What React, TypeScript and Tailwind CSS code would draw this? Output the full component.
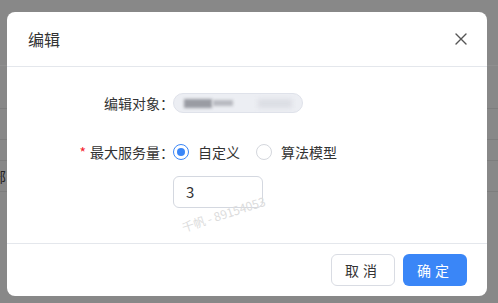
import React from 'react';

const font = { fontFamily: '"Noto Sans CJK SC", "Noto Sans", sans-serif' };

function Radio({ checked, label }: { checked?: boolean; label: string }) {
  return (
    <label className="flex items-center gap-[9px] text-[14px] text-[#333]">
      {checked ? (
        <span className="flex h-4 w-4 items-center justify-center rounded-full border border-[#3a86f7]">
          <span className="h-2 w-2 rounded-full bg-[#3a86f7]" />
        </span>
      ) : (
        <span className="h-4 w-4 rounded-full border border-[#d4d7dd] bg-white" />
      )}
      <span>{label}</span>
    </label>
  );
}

function Backdrop() {
  return (
    <div className="flex h-full w-full flex-col bg-[#888]">
      <div className="h-[66px] border-b border-[#8f8f8f]" />
      <div className="h-[43px] border-b border-[#7d7d7d]" />
      <div className="h-[31px] border-b border-[#7d7d7d]" />
      <div className="h-[21px] border-b border-[#7d7d7d]" />
      <div className="flex h-[31px] items-center border-b border-[#7d7d7d]">
        <span className="-ml-[8px] text-[14px] text-[#222]">部</span>
      </div>
    </div>
  );
}

export default function App() {
  return (
    <div className="relative h-[303px] w-[498px] overflow-hidden" style={font}>
      <Backdrop />
      <div className="absolute inset-0 pl-[7px] pt-[12px]">
        <div className="relative flex h-[284px] w-[480px] flex-col overflow-hidden rounded-[8px] bg-white">
          <div className="flex h-[55px] items-center justify-between border-b border-[#e4e7ec] pl-[21px] pr-[20px]">
            <span className="text-[16px] text-[#333]">编辑</span>
            <svg width="14" height="14" viewBox="0 0 14 14" className="mr-[-1px]">
              <path d="M2 2L12 12M12 2L2 12" stroke="#555" strokeWidth="1.4" strokeLinecap="round" />
            </svg>
          </div>

          <div className="flex flex-1 flex-col pt-[26px] text-[14px] text-[#333]">
            <div className="flex h-[20px] items-center">
              <div className="w-[160px] text-right">
                编辑对象<span className="mr-[-7px]">：</span>
              </div>
              <div className="ml-[6px] flex h-[20px] w-[130px] items-center rounded-full border border-[#dfe2ea] bg-[#eceef3] px-[10px]">
                <span className="h-[9px] w-[28px] bg-[#9a9ca3] blur-[1.5px]" />
                <span className="ml-[1px] h-[6px] w-[20px] bg-[#b8bac0] blur-[1.5px]" />
                <span className="ml-auto h-[9px] w-[34px] bg-[#dcdee4] blur-[2px]" />
              </div>
            </div>

            <div className="mt-[29px] flex h-[20px] items-center">
              <div className="w-[160px] text-right">
                <span className="mr-[4px] text-[#f5222d]">*</span>最大服务量<span className="mr-[-7px]">：</span>
              </div>
              <div className="ml-[6px] flex items-center gap-[16px]">
                <Radio checked label="自定义" />
                <Radio label="算法模型" />
              </div>
            </div>

            <div className="relative ml-[166px] mt-[14px] flex h-[32px] w-[90px] items-center rounded-[6px] border border-[#d4d8e0] px-[12px] text-[15px]">
              3
              <span className="pointer-events-none absolute left-[6px] top-[28px] -rotate-[18deg] whitespace-nowrap text-[12px] text-[#dcdcdc]">
                千帆 - 89154053
              </span>
            </div>
          </div>

          <div className="flex h-[53px] items-start justify-end gap-[8px] border-t border-[#e4e7ec] pr-[20px] pt-[10px]">
            <button className="h-[32px] w-[64px] rounded-[6px] border border-[#d9dce3] bg-white text-[14px] tracking-[4px] text-[#333]">
              取消
            </button>
            <button className="h-[32px] w-[64px] rounded-[6px] bg-[#3a86f7] text-[14px] tracking-[4px] text-white">
              确定
            </button>
          </div>
        </div>
      </div>
    </div>
  );
}
